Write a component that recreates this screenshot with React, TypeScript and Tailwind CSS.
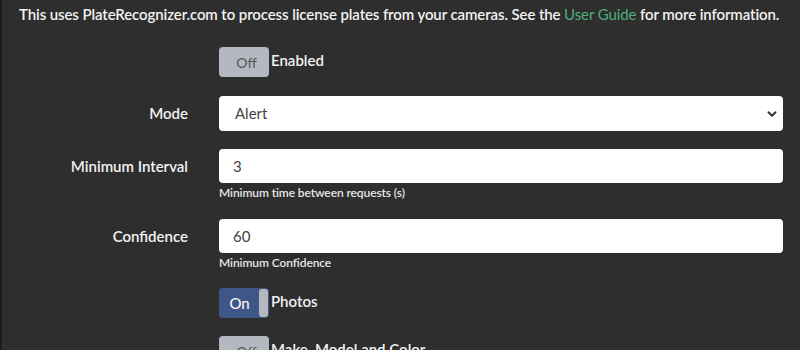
import { ChevronDown } from "lucide-react";

function Toggle({ on }: { on: boolean }) {
  if (on) {
    return (
      <div className="flex h-[30px] w-[50px] shrink-0 items-stretch rounded-[4px] bg-[#3f5788]">
        <span className="flex flex-1 items-center justify-center pl-[1px] text-[15px] text-white">On</span>
        <span className="my-[1px] mr-[1px] w-[9px] rounded-[3px] bg-[#b4b8c0]" />
      </div>
    );
  }
  return (
    <div className="flex h-[30px] w-[50px] shrink-0 items-center justify-center rounded-[4px] bg-[#b4b8c0] pl-[5px] text-[14px] text-[#555]">
      Off
    </div>
  );
}

function ToggleRow({ on, label, className }: { on: boolean; label: string; className?: string }) {
  return (
    <div className={"col-start-2 flex items-start gap-[2px] " + (className || "")}>
      <Toggle on={on} />
      <span className="pt-[2px] text-[15px] font-semibold">{label}</span>
    </div>
  );
}

export default function App() {
  return (
    <div className="h-[350px] overflow-hidden border-l-2 border-[#1c1c1c] bg-[#2e2e2e] font-['Lato',sans-serif] text-[#f2f2f2]">
      <p className="pl-[17px] pt-[4px] text-[15px] font-semibold leading-[20px] tracking-[-0.1px]">
        This uses PlateRecognizer.com to process license plates from your cameras. See the{" "}
        <span className="font-normal text-[#4fae7f]">User Guide</span> for more information.
      </p>

      <div className="mt-[23px] grid grid-cols-[186px_564px] gap-x-[31px]">
        <ToggleRow on={false} label="Enabled" />

        <div className="mt-[19px] flex h-[35px] items-center justify-end text-[15px] font-semibold">Mode</div>
        <div className="mt-[19px] flex h-[35px] items-center justify-between rounded-[4px] bg-white pl-[16px] pr-[4px] text-[15px] text-[#444]">
          <span>Alert</span>
          <ChevronDown size={14} strokeWidth={3.5} className="text-[#333]" />
        </div>

        <div className="mt-[18px] flex h-[34px] items-center justify-end text-[15px] font-semibold">Minimum Interval</div>
        <div className="mt-[18px]">
          <div className="flex h-[34px] items-center rounded-[4px] bg-white pl-[14px] text-[15px] text-[#444]">3</div>
          <div className="mt-[3px] text-[12px] font-semibold leading-[14px] tracking-[-0.1px] text-[#e6e6e6]">Minimum time between requests (s)</div>
        </div>

        <div className="mt-[19px] flex h-[34px] items-center justify-end text-[15px] font-semibold">Confidence</div>
        <div className="mt-[19px]">
          <div className="flex h-[34px] items-center rounded-[4px] bg-white pl-[14px] text-[15px] text-[#444]">60</div>
          <div className="mt-[3px] text-[12px] font-semibold leading-[14px] tracking-[-0.1px] text-[#e6e6e6]">Minimum Confidence</div>
        </div>

        <ToggleRow on={true} label="Photos" className="mt-[18px]" />
        <ToggleRow on={false} label="Make, Model and Color" className="mt-[18px]" />
      </div>
    </div>
  );
}
